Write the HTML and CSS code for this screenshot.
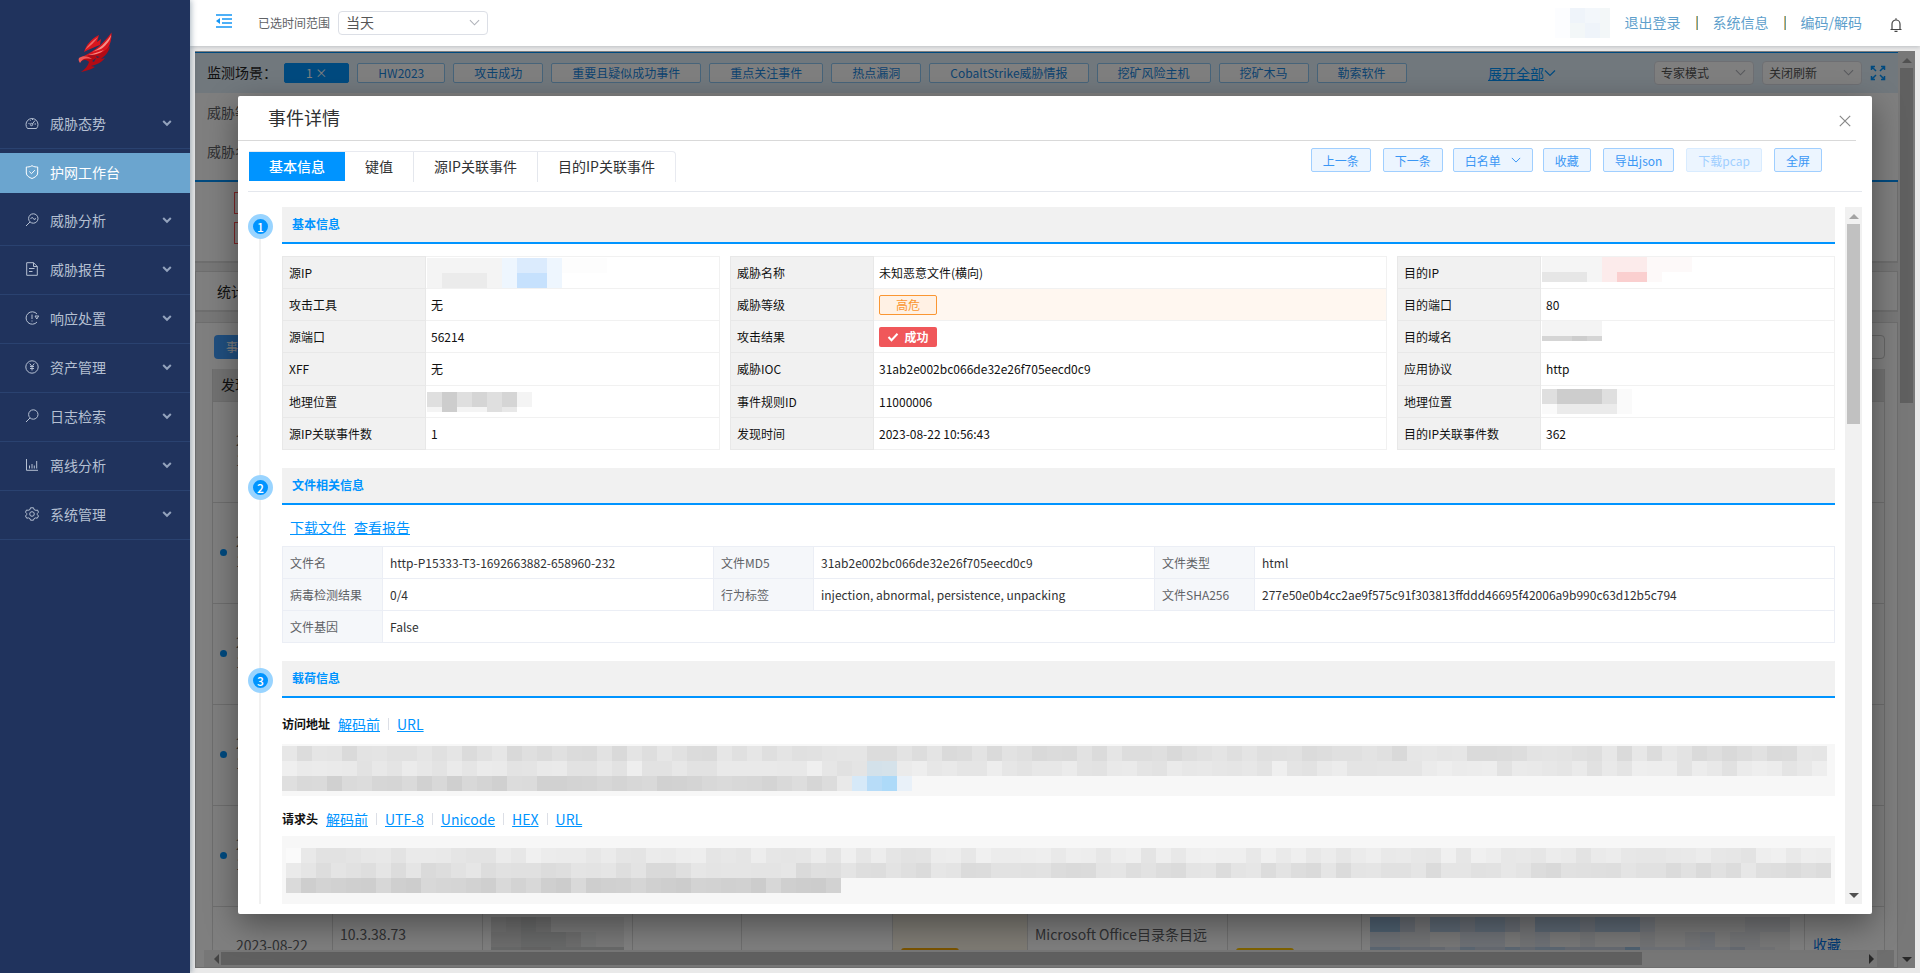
FILE: index.html
```html
<!DOCTYPE html>
<html lang="zh-CN">
<head>
<meta charset="utf-8">
<title>事件详情</title>
<link rel="stylesheet" href="styles.css">
</head>
<body>
<svg class="defs" aria-hidden="true">
  <symbol id="chev" viewBox="0 0 12 12"><path d="M1 3.5 6 8.5 11 3.5" fill="none" stroke="currentColor" stroke-width="1.2"/></symbol>
  <symbol id="chev-bold" viewBox="0 0 10 10"><path d="M1.2 3 5 6.8 8.8 3" fill="none" stroke="currentColor" stroke-width="2"/></symbol>
</svg>
<div class="app">
  <aside class="sidebar">
    <div class="logo">
      <svg viewBox="0 0 34 40" width="34" height="40">
        <path d="M6 20C8 13 13 7 21 3L19 10 23 7 22 13C17 15 11 17 6 20Z" fill="#d9161e"/>
        <path d="M7 18C10 13 14 9 20 5 17 10 12 14 7 18Z" fill="#f06a66"/>
        <path d="M3 25C12 22 24 14 33.500 0.500 34 9 31 17 25 22 18 24 10 23 3 25Z" fill="#d8141d"/>
        <path d="M14 20C21 17 28 11 33 3 33 7 29 13 23 17Z" fill="#f58e86"/>
        <path d="M4 24.500C11 23 19 21 26 18 22 22 15 23 10 23Z" fill="#f58e86"/>
        <path d="M8 24C17 24 26 21 32 14 31 20 27 24 23 27L27 26C23 31 18 33 13 34L17 35C12 38 7 39 3 40 7 37 10 34 11 30 8 27 5 28 1.500 30 1 27 3 25 8 24Z" fill="#b30b14"/>
        <path d="M1 26C5 23 11 24 14 27L10 26.500C7 26 4 27 2 31 1 29 0 28 1 26Z" fill="#ef5a58"/>
        <path d="M14 29 18 26 16 30Z M18 24 22 25 19 26Z" fill="#20335d"/>
      </svg>
    </div>
    <nav class="menu">
      <a class="item" href="#"><svg class="ico" viewBox="0 0 14 14"><path d="M2.500 12.500A6 6 0 1 1 11.500 12.500Z M7 8.500 10 4.500 M3.500 7.500h1 M9.500 8h1.500 M5 4l.5.7 M7.500 3v1"/><circle cx="6.500" cy="8.500" r="1.200"/></svg><span>威胁态势</span><svg class="arr"><use href="#chev-bold"/></svg></a>
      <a class="item active" href="#"><svg class="ico" viewBox="0 0 14 14"><path d="M7 .7C9 2 11 2 12.700 2V8C12.700 11 9.500 12.500 7 13.500 4.500 12.500 1.300 11 1.300 8V2C3 2 5 2 7 .7Z M4.300 6.500 6.500 8.700 9.800 5.200"/></svg><span>护网工作台</span></a>
      <a class="item" href="#"><svg class="ico" viewBox="0 0 14 14"><circle cx="8.300" cy="5.500" r="4.700"/><path d="M5 9 1 13 M5.500 5.500 7.500 4.500 9 6.500 11 5.500"/></svg><span>威胁分析</span><svg class="arr"><use href="#chev-bold"/></svg></a>
      <a class="item" href="#"><svg class="ico" viewBox="0 0 14 14"><path d="M1.700.7H8.500L12.300 4.500V13.300H1.700Z M8.500.7V4.500H12.300 M4 6.500h5.500 M4 9.500h3.500"/></svg><span>威胁报告</span><svg class="arr"><use href="#chev-bold"/></svg></a>
      <a class="item" href="#"><svg class="ico" viewBox="0 0 14 14"><path d="M12 3A6.200 6.200 0 1 0 12 11 M10 5h3.800 M10 5 11.800 8 13.600 5 M7 3.500V8 M7 9.500v1"/></svg><span>响应处置</span><svg class="arr"><use href="#chev-bold"/></svg></a>
      <a class="item" href="#"><svg class="ico" viewBox="0 0 14 14"><circle cx="7" cy="7" r="6.200"/><path d="M4.700 3.500 7 6.500 9.300 3.500 M7 6.500V10.500 M5 6.500h4 M5 8.500h4"/></svg><span>资产管理</span><svg class="arr"><use href="#chev-bold"/></svg></a>
      <a class="item" href="#"><svg class="ico" viewBox="0 0 14 14"><circle cx="8.300" cy="5.500" r="4.700"/><path d="M5 9 1 13"/></svg><span>日志检索</span><svg class="arr"><use href="#chev-bold"/></svg></a>
      <a class="item" href="#"><svg class="ico" viewBox="0 0 14 14"><path d="M1.500 1V12.300H13 M4.500 7.500V10.500 M7 6V10.500 M9.300 7.500V10.500 M11.700 3V10.500"/></svg><span>离线分析</span><svg class="arr"><use href="#chev-bold"/></svg></a>
      <a class="item" href="#"><svg class="ico" viewBox="0 0 14 14"><circle cx="7" cy="7" r="2.300"/><path d="M5.500.8H8.500L9 2.600 11 3.400 12.500 3 13.500 5.200 12.300 6.500V7.600L13.500 9 12.300 11.200 10.500 10.900 9 11.600 8.500 13.200H5.500L5 11.600 3.500 10.900 1.700 11.200.5 9 1.700 7.600V6.500L.5 5.200 1.500 3 3.200 3.300 5 2.600Z"/></svg><span>系统管理</span><svg class="arr"><use href="#chev-bold"/></svg></a>
    </nav>
  </aside>

  <div class="page">
    <header class="topbar">
      <button class="fold" aria-label="折叠菜单"><svg viewBox="0 0 16 14" width="16" height="14"><path d="M0 1H16M6 5H16M6 9H16M0 13H16" stroke="#1596f5" stroke-width="1.500"/><path d="M0 7 4 4V10Z" fill="#1596f5"/></svg></button>
      <label class="range" for="range">已选时间范围</label>
      <div class="select wide"><select id="range"><option>当天</option></select><svg><use href="#chev"/></svg></div>
      <div class="user">
        <div class="mosaic avatar" data-tone="user" data-rows="acdb|abcb"></div>
        <a href="#">退出登录</a><i></i><a href="#">系统信息</a><i></i><a href="#">编码/解码</a>
        <button class="bell" aria-label="通知"><svg viewBox="0 0 12 14" width="12" height="14"><path d="M.5 11.500H11.500M2 11.500V6A4 4 0 0 1 10 6V11.500M6 2V.3M4.500 13.300H7.500" fill="none" stroke="#444" stroke-width="1.200"/></svg></button>
      </div>
    </header>

    <main class="main">
      <div class="view">
        <section class="filters">
          <div class="scene">
            <span class="lbl">监测场景：</span>
            <div class="tags">
              <button class="tag on">1 ×</button><button class="tag">HW2023</button><button class="tag">攻击成功</button><button class="tag">重要且疑似成功事件</button><button class="tag">重点关注事件</button><button class="tag">热点漏洞</button><button class="tag">CobaltStrike威胁情报</button><button class="tag">挖矿风险主机</button><button class="tag">挖矿木马</button><button class="tag">勒索软件</button>
            </div>
            <a class="more" href="#"><u>展开全部</u><svg><use href="#chev"/></svg></a>
            <div class="select"><select aria-label="模式"><option>专家模式</option></select><svg><use href="#chev"/></svg></div>
            <div class="select"><select aria-label="刷新"><option>关闭刷新</option></select><svg><use href="#chev"/></svg></div>
            <svg class="full" viewBox="0 0 16 16" width="16" height="16"><path d="M1.500 5V1.500H5M11 1.500H14.500V5M14.500 11V14.500H11M5 14.500H1.500V11M2 2 6 6M14 2 10 6M14 14 10 10M2 14 6 10" fill="none" stroke="#0094ff" stroke-width="1.500"/></svg>
          </div>
          <div class="line">威胁等级</div>
          <div class="line">威胁名称</div>
        </section>
        <section class="levels"><span></span><span></span></section>
        <section class="panel stat">统计</section>
        <section class="panel events">
          <div class="tools"><button class="primary">事件列表</button><span class="mini"></span></div>
          <div class="list">
            <div class="row head"><div>发现时间</div></div>
            <div class="row"><div class="time">2023-08-22<br>10:56:43</div><div></div><div></div><div></div><div></div><div class="warn"></div><div></div><div></div><div></div><div></div></div>
            <div class="row new"><div class="time">2023-08-22<br>10:56:43</div><div></div><div></div><div></div><div></div><div class="warn"></div><div></div><div></div><div></div><div></div></div>
            <div class="row new"><div class="time">2023-08-22<br>10:56:43</div><div></div><div></div><div></div><div></div><div class="warn"></div><div></div><div></div><div></div><div></div></div>
            <div class="row new"><div class="time">2023-08-22<br>10:56:43</div><div></div><div></div><div></div><div></div><div class="warn"></div><div></div><div></div><div></div><div></div></div>
            <div class="row new"><div class="time">2023-08-22<br>10:56:43</div><div></div><div></div><div></div><div></div><div class="warn"></div><div></div><div></div><div></div><div></div></div>
            <div class="row"><div class="time">2023-08-22</div><div class="cell">10.3.38.73</div><div class="blot"><div class="mosaic" data-tone="dim" data-rows="cdedaaaaaa|ddeeedbaaa|eeffeeeeee"></div></div><div></div><div></div><div class="warn"><span class="mark"></span></div><div class="cell">Microsoft Office目录条目远</div><div><span class="mark solid"></span></div><div class="blot"><div class="mosaic" data-tone="blue" data-rows="ffdbeedeedbeeedeeecaaaaaabbb|ccbbaacccabcaabaaabaabcabbaa|eedddceddedeeddddfccccccdbba"></div></div><div class="fav"><a href="#">收藏</a></div></div>
          </div>
          <div class="hbar"><span class="left"></span><span class="thumb"></span><span class="right"></span><span class="corner"></span></div>
        </section>
      </div>
      <div class="vbar"><span class="up"></span><span class="thumb"></span><span class="down"></span></div>

      <div class="overlay">
        <div class="dialog" role="dialog" aria-labelledby="dlg">
          <div class="dhead"><h1 id="dlg">事件详情</h1><button class="close" aria-label="关闭"><svg viewBox="0 0 12 12" width="12" height="12"><path d="M.8.8 11.200 11.200M11.200.8.8 11.200" stroke="#888" stroke-width="1.200"/></svg></button></div>
          <div class="dtools">
            <div class="tabs" role="tablist"><button role="tab" class="on">基本信息</button><button role="tab">键值</button><button role="tab">源IP关联事件</button><button role="tab">目的IP关联事件</button></div>
            <div class="acts"><button>上一条</button><button>下一条</button><button class="drop">白名单<svg><use href="#chev"/></svg></button><button>收藏</button><button>导出json</button><button disabled>下载pcap</button><button>全屏</button></div>
          </div>
          <div class="dbody">
            <div class="scroll">
              <section class="sec">
                <div class="rail"><b>1</b></div>
                <div class="body">
                  <h2>基本信息</h2>
                  <div class="infos">
                    <table class="info">
                      <tr><th>源IP</th><td class="m"><div class="mosaic" data-tone="ip" data-rows="bbbbbeddeaaa|bcccbeffe"></div></td></tr>
                      <tr><th>攻击工具</th><td>无</td></tr>
                      <tr><th>源端口</th><td>56214</td></tr>
                      <tr><th>XFF</th><td>无</td></tr>
                      <tr><th>地理位置</th><td class="m"><div class="mosaic thin" data-tone="gray" data-rows="dfdedeb|bfbbdc"></div></td></tr>
                      <tr><th>源IP关联事件数</th><td>1</td></tr>
                    </table>
                    <table class="info">
                      <tr><th>威胁名称</th><td>未知恶意文件(横向)</td></tr>
                      <tr><th>威胁等级</th><td class="hl"><span class="lv">高危</span></td></tr>
                      <tr><th>攻击结果</th><td><span class="ok"><svg viewBox="0 0 12 12" width="12" height="12"><path d="M1.500 6 4.500 9.200 10.500 2.800" fill="none" stroke="#fff" stroke-width="2"/></svg>成功</span></td></tr>
                      <tr><th>威胁IOC</th><td>31ab2e002bc066de32e26f705eecd0c9</td></tr>
                      <tr><th>事件规则ID</th><td>11000006</td></tr>
                      <tr><th>发现时间</th><td>2023-08-22 10:56:43</td></tr>
                    </table>
                    <table class="info">
                      <tr><th>目的IP</th><td class="m top"><div class="mosaic half" data-tone="red" data-rows="bbbbdddaaa|cccbdffa"></div></td></tr>
                      <tr><th>目的端口</th><td>80</td></tr>
                      <tr><th>目的域名</th><td class="m top"><div class="mosaic thin" data-tone="gray" data-rows="bbbb|eefe"></div></td></tr>
                      <tr><th>应用协议</th><td>http</td></tr>
                      <tr><th>地理位置</th><td class="m"><div class="mosaic half" data-tone="gray" data-rows="dfffda|aCCCCa"></div></td></tr>
                      <tr><th>目的IP关联事件数</th><td>362</td></tr>
                    </table>
                  </div>
                </div>
              </section>
              <section class="sec">
                <div class="rail"><b>2</b></div>
                <div class="body">
                  <h2>文件相关信息</h2>
                  <div class="links"><a href="#">下载文件</a><a href="#">查看报告</a></div>
                  <table class="file">
                    <colgroup><col class="k"><col class="v1"><col class="k"><col class="v2"><col class="k"><col></colgroup>
                    <tr><th>文件名</th><td>http-P15333-T3-1692663882-658960-232</td><th>文件MD5</th><td>31ab2e002bc066de32e26f705eecd0c9</td><th>文件类型</th><td>html</td></tr>
                    <tr><th>病毒检测结果</th><td>0/4</td><th>行为标签</th><td>injection, abnormal, persistence, unpacking</td><th>文件SHA256</th><td>277e50e0b4cc2ae9f575c91f303813ffddd46695f42006a9b990c63d12b5c794</td></tr>
                    <tr><th>文件基因</th><td colspan="5">False</td></tr>
                  </table>
                </div>
              </section>
              <section class="sec">
                <div class="rail"><b>3</b></div>
                <div class="body">
                  <h2>载荷信息</h2>
                  <div class="codes"><strong>访问地址</strong><a href="#">解码前</a><a href="#">URL</a></div>
                  <div class="payload"><div class="mosaic" data-tone="text" data-random="103,103,42" data-blue="1"></div></div>
                  <div class="codes second"><strong>请求头</strong><a href="#">解码前</a><a href="#">UTF-8</a><a href="#">Unicode</a><a href="#">HEX</a><a href="#">URL</a></div>
                  <div class="payload tall"><div class="mosaic" data-tone="text" data-random="103,103,37"></div></div>
                </div>
              </section>
            </div>
            <div class="dbar"><span class="up"></span><span class="thumb"></span><span class="down"></span></div>
          </div>
        </div>
      </div>
    </main>
  </div>
</div>
<script src="script.js"></script>
</body>
</html>
```
FILE: styles.css
```css
* { box-sizing: border-box; }
body {
  margin: 0;
  font: 12px/20px "Noto Sans CJK SC", "Open Sans", sans-serif;
  color: #303133;
}
button, select { font: inherit; color: inherit; }
button { cursor: pointer; padding: 0; border: 0; background: none; }
.defs { display: none; }
.app { display: flex; height: 100vh; overflow: hidden; }

/* sidebar */
.sidebar { flex: none; width: 190px; background: #20335d; position: relative; z-index: 2; box-shadow: 1px 0 6px rgba(0, 40, 70, .35); }
.logo { height: 100px; padding: 32px 0 0 78px; }
.logo svg { display: block; }
.item { display: flex; align-items: center; height: 49px; padding: 0 18px 2px 25px; border-bottom: 1px solid #2a4270; color: #b5c0d2; font-size: 14px; text-decoration: none; }
.item.active { height: 40px; margin: 4px 0; border: 0; background: #6ba5cf; color: #fff; }
.item span { flex: 1; margin-left: 11px; }
.ico { width: 14px; height: 14px; fill: none; stroke: currentColor; stroke-width: 1; }
.arr { width: 10px; height: 10px; color: #93a3bd; }

/* top bar */
.page { flex: 1; min-width: 0; display: flex; flex-direction: column; background: #e9e9e9; }
.topbar { flex: none; display: flex; align-items: center; height: 46px; padding: 0 18px 0 26px; background: #fff; box-shadow: 0 1px 4px rgba(0, 20, 40, .2); position: relative; }
.fold { height: 22px; }
.range { margin: 0 8px 0 26px; color: #606266; }
.select { position: relative; width: 100px; height: 24px; }
.select select { appearance: none; width: 100%; height: 100%; padding: 0 6px; border: 1px solid #dcdfe6; border-radius: 4px; background: #fff; color: #555; }
.select svg { position: absolute; right: 8px; top: 6px; width: 11px; height: 11px; color: #b0b3ba; pointer-events: none; }
.select.wide { width: 150px; font-size: 14px; }
.select.wide select { padding: 0 7px 2px; }
.user { display: flex; align-items: center; margin-left: auto; color: #5e9fcc; font-size: 14px; }
.user a { padding-bottom: 2px; color: inherit; text-decoration: none; }
.user i { width: 2px; height: 14px; margin: 0 15px; background: #6aa0a8; border-left: 1px solid #d7b36c; }
.avatar { width: 55px; margin-right: 15px; }
.bell { margin: 4px 0 0 28px; height: 14px; }
.bell svg { display: block; }

/* page behind the dialog */
.main { flex: 1; min-height: 0; margin: 5px; display: flex; position: relative; background: #eee; overflow: hidden; }
.view { flex: 1; min-width: 0; display: flex; flex-direction: column; }
.filters { padding-top: 1px; height: 131px; border-bottom: 2px solid #0094ff; background: #fff; font-size: 14px; }
.scene { display: flex; align-items: center; height: 41px; padding: 0 12px 0 12px; border-top: 1px solid #0094ff; background: #e2f0fb; }
.scene .lbl { width: 77px; flex: none; padding-bottom: 2px; color: #222; }
.tags { display: flex; gap: 8px; font-size: 12px; }
.tag { height: 20px; padding: 0 20px; border: 1px solid #8ec9f5; border-radius: 2px; background: #fff; color: #1a87e0; line-height: 18px; white-space: nowrap; }
.tag.on { padding: 0 21px; background: #0094ff; border-color: #0094ff; color: #fff; }
.more { display: flex; align-items: center; margin-left: auto; margin-right: 98px; color: #0094ff; }
.more svg { width: 12px; height: 12px; }
.scene .select { flex: none; font-size: 12px; margin-right: 8px; }
.full { flex: none; }
.line { height: 39px; padding-left: 12px; line-height: 39px; color: #606266; }
.levels { height: 81px; padding: 10px 39px; display: grid; gap: 8px; align-content: start; background: #fff; border-right: 1px solid #ddd; border-bottom: 2px solid #ddd; }
.levels span { width: 90px; height: 22px; border: 1px solid #ff4d4f; }
.panel { background: #fff; border: 1px solid #ddd; }
.stat { height: 41px; margin: 8px 0 10px; padding: 0 21px; line-height: 38px; font-size: 14px; color: #222; border-bottom-width: 2px; }
.events { flex: 1; min-height: 0; display: flex; flex-direction: column; overflow: hidden; }
.tools { flex: none; display: flex; justify-content: space-between; height: 46px; padding: 12px 12px 0 18px; }
.primary { width: 96px; height: 24px; padding-left: 12px; border-radius: 4px; background: #409eff; color: #fff; text-align: left; }
.mini { width: 80px; height: 24px; border: 1px solid #ccc; border-radius: 4px; }
.list { flex: 1; min-height: 0; margin: 0 12px 0 16px; overflow: hidden; font-size: 14px; border-left: 1px solid #ddd; border-right: 1px solid #ddd; color: #606266; }
.row { display: grid; grid-template-columns: 120px 150px 150px 109px 151px 135px 200px 134px 1fr 79px; height: 101px; border-bottom: 1px solid #ddd; }
.row > div { border-right: 1px solid #ddd; }
.row > div:last-child { border-right: 0; }
.row.head { height: 33px; background: #e4e4e4; line-height: 30px; color: #222; }
.row.head div { padding-left: 8px; border: 0; }
.row .time { padding: 28px 0 0 23px; position: relative; }
.row.new .time::before { content: ""; position: absolute; left: 7px; top: 46px; width: 7px; height: 7px; border-radius: 50%; background: #0094ff; }
.row .warn { background: #fcf7e8; }
.cell { padding: 17px 7px; white-space: nowrap; }
.blot { padding: 10px 8px; overflow: hidden; }
.mark { display: block; width: 58px; height: 20px; margin: 41px 8px; border: 2px solid #f5a700; border-radius: 3px; }
.mark.solid { background: #ffc400; border-color: #ffc400; }
.fav { padding: 27px 8px; }
.fav a { color: #0074e8; text-decoration: none; }
.hbar { flex: none; display: flex; align-items: center; height: 17px; margin: 0 3px 0 8px; background: #efefef; }
.hbar .left { width: 17px; }
.hbar .thumb { flex: 1; max-width: 1421px; height: 13px; background: #c1c1c1; }
.hbar .right { margin-left: auto; margin-right: 3px; border: 5px solid transparent; border-left-color: #505050; border-right: 0; }
.hbar .left::before { content: ""; display: block; width: 5px; margin-left: 5px; border: 5px solid transparent; border-right-color: #888; border-left: 0; }
.hbar .corner { width: 17px; height: 17px; background: #dcdcdc; }
.vbar, .dbar { flex: none; width: 17px; display: flex; flex-direction: column; align-items: center; background: #f1f1f1; }
.up { margin: 7px 0 5px; border: 5px solid transparent; border-bottom-color: #a3a3a3; border-top: 0; }
.down { margin: auto 0 6px; border: 5px solid transparent; border-top-color: #505050; border-bottom: 0; }
.vbar .thumb { width: 13px; height: 335px; background: #c1c1c1; }
.dbar .thumb { width: 13px; height: 200px; background: #c1c1c1; }

/* dialog */
.overlay { position: absolute; inset: 0; display: flex; padding: 45px 43px 54px; background: rgba(0, 0, 0, .5); }
.dialog { flex: 1; min-width: 0; display: flex; flex-direction: column; border-radius: 2px; background: #fff; box-shadow: 0 10px 32px rgba(0, 0, 0, .4); }
.dhead { flex: none; display: flex; align-items: center; justify-content: space-between; height: 45px; margin-right: 16px; padding: 0 5px 0 30px; border-bottom: 1px solid #d9d9d9; }
.dhead h1 { margin: 0; padding-bottom: 2px; font-size: 18px; font-weight: 400; line-height: 24px; }
.close { width: 12px; height: 18px; padding-top: 6px; }
.close svg { display: block; }
.dtools { flex: none; display: flex; justify-content: space-between; height: 51px; margin: 0 10px; padding: 10px 40px 0 1px; border-bottom: 1px solid #e4e7ed; }
.tabs { display: flex; height: 31px; border: 1px solid #e8eaf0; border-width: 1px 1px 0 0; border-radius: 0 4px 0 0; }
.tabs button { padding: 0 20px 2px; font-size: 14px; line-height: 28px; border-left: 1px solid #e4e7ed; }
.tabs .on { background: #0094ff; color: #fff; border: 0; height: 29px; font-weight: 500; }
.tabs .on + button { border-left: 0; }
.acts { display: flex; gap: 12px; margin-top: -3px; }
.acts button { height: 24px; padding: 0 11px; border: 1px solid #a0cfff; border-radius: 2px; background: #ecf5ff; color: #3a97f5; line-height: 21px; white-space: nowrap; }
.acts button:disabled { color: #a0cfff; border-color: #d9ecff; }
.acts .drop { margin: 0 -2px; display: flex; align-items: center; }
.drop svg { width: 10px; height: 10px; margin-left: 10px; }
.dbody { flex: 1; min-height: 0; display: flex; gap: 10px; padding: 15px 10px 10px; }
.scroll { flex: 1; min-width: 0; overflow: hidden; }
.sec { display: grid; grid-template-columns: 25px minmax(0, 1fr); gap: 9px; }
.rail { padding-top: 7px; background: linear-gradient(#f1f1f1, #f1f1f1) 11px 0 / 2px 100% no-repeat; }
.sec:first-child .rail { background-position-y: 20px; }
.rail b { display: block; width: 25px; height: 25px; border: 5px solid #99d4ff; border-radius: 50%; background: #0094ff; color: #fff; font: 500 12px/15px "Noto Sans CJK SC", sans-serif; text-align: center; }
.body { padding-bottom: 18px; }
.body h2 { margin: 0; height: 37px; padding: 0 10px; border-bottom: 2px solid #0094ff; background: #f1f1f1; color: #0094ff; font-size: 12px; font-weight: 700; line-height: 34px; }
.infos { display: grid; grid-template-columns: 2fr 3fr 2fr; gap: 10px; margin-top: 12px; align-items: start; }
.info, .file { width: 100%; border-collapse: collapse; table-layout: fixed; }
.info th, .info td { height: 32px; padding: 0 6px; border: 1px solid #f1f1f1; line-height: 20px; color: #111; }
.info tr:nth-child(4) th { height: 33px; }
.info th { width: 143px; border-color: #e8e8e8; background: #f1f1f1; font-weight: 400; text-align: left; }
.info td { padding-left: 5px; }
.info .m { padding: 0 0 0 1px; }
.info .top { vertical-align: top; }
.info .hl { background: #fff7f0; }
.lv, .ok { width: 58px; height: 20px; border-radius: 2px; line-height: 18px; }
.lv { display: block; border: 1px solid #fa9632; background: #fff1e4; color: #fa9632; text-align: center; }
.ok { display: flex; align-items: center; justify-content: center; gap: 5px; background: #f0575a; color: #fff; font-weight: 700; }
.links { display: flex; gap: 8px; padding: 12px 8px 8px; font-size: 14px; line-height: 21px; }
.links a, .codes a { color: #0094ff; }
.file th, .file td { height: 32px; padding: 0 7px; border: 1px solid #ebeef5; line-height: 20px; text-align: left; white-space: nowrap; }
.file th { background: #f5f7fa; color: #606266; font-weight: 400; }
.k { width: 100px; }
.v1 { width: 331px; }
.v2 { width: 341px; }
.codes { display: flex; align-items: center; height: 46px; padding-top: 6px; font-size: 14px; }
.codes strong { margin-right: 8px; font-size: 12px; color: #111; }
.codes a + a { margin-left: 8px; }
.codes a + a::before { content: ""; display: inline-block; width: 1px; height: 12px; margin-right: 8px; background: #dcdfe6; }
.codes.second { height: 40px; }
.payload { height: 52px; padding: 2px 0; background: #f7f7f7; overflow: hidden; }
.payload.tall { height: 90px; padding: 12px 4px; }
.mosaic { display: grid; justify-content: start; overflow: hidden; }
.mosaic div { display: flex; height: 15px; overflow: hidden; }
.mosaic span { flex: none; width: 15px; height: 15px; }
.mosaic.thin div:last-child { height: 5px; }
.mosaic.half div:last-child { height: 10px; }
```
FILE: script.js
```js
// Fills every redacted area with a grid of flat colour cells.
const tones = {
  user: { a: '#fcfdff', b: '#f3f7f8', c: '#eff4fa', d: '#f3f7fb' },
  ip: { a: '#fdfdfd', b: '#f4f4f4', c: '#ebebeb', d: '#dbebfd', e: '#eef6fe', f: '#c6e1fd' },
  gray: { a: '#fafafa', b: '#f4f4f4', c: '#e8e8e8', C: '#ebebeb', d: '#dfdfdf', e: '#d5d5d5', f: '#cdcdcd' },
  red: { a: '#fdf9f9', b: '#f5f5f5', c: '#e6e6e6', d: '#fcebeb', f: '#facfcf' },
  dim: { a: '#f0f0f0', b: '#e8eaea', c: '#e2e2e2', d: '#dadada', e: '#d0d3d3', f: '#c8c8c8' },
  blue: { a: '#f0f0f0', b: '#e4e6ea', c: '#dce3ec', d: '#cbd5e2', e: '#b6cde4', f: '#9dc0e0' }
};

function addRow(host, colors) {
  const row = document.createElement('div');
  for (const color of colors) {
    const cell = document.createElement('span');
    cell.style.backgroundColor = color;
    row.append(cell);
  }
  host.append(row);
}

let seed = 17;
function next() {
  seed = (seed * 16807) % 2147483647;
  return seed / 2147483647;
}

document.querySelectorAll('.mosaic').forEach((host) => {
  if (host.dataset.rows) {
    const tone = tones[host.dataset.tone];
    host.dataset.rows.split('|').forEach((r) => addRow(host, [...r].map((c) => tone[c] || 'transparent')));
    return;
  }
  const base = host.dataset.blue ? [224, 232, 214] : [233, 224, 210];
  host.dataset.random.split(',').forEach((count, r) => {
    const colors = Array.from({ length: +count }, (_, i) => {
      const edge = i ? 0 : 14;
      const v = Math.round(base[r] + edge + (next() - 0.5) * 14);
      return `rgb(${v}, ${v}, ${v})`;
    });
    if (host.dataset.blue && r === 1) colors.splice(39, 2, '#d3e1ea', '#d5e2ea');
    if (host.dataset.blue && r === 2) colors.splice(37, 5, '#e9e9e9', '#d6e9f8', '#b7dcf8', '#addaf9', '#e9f1f9');
    addRow(host, colors);
  });
});
```
